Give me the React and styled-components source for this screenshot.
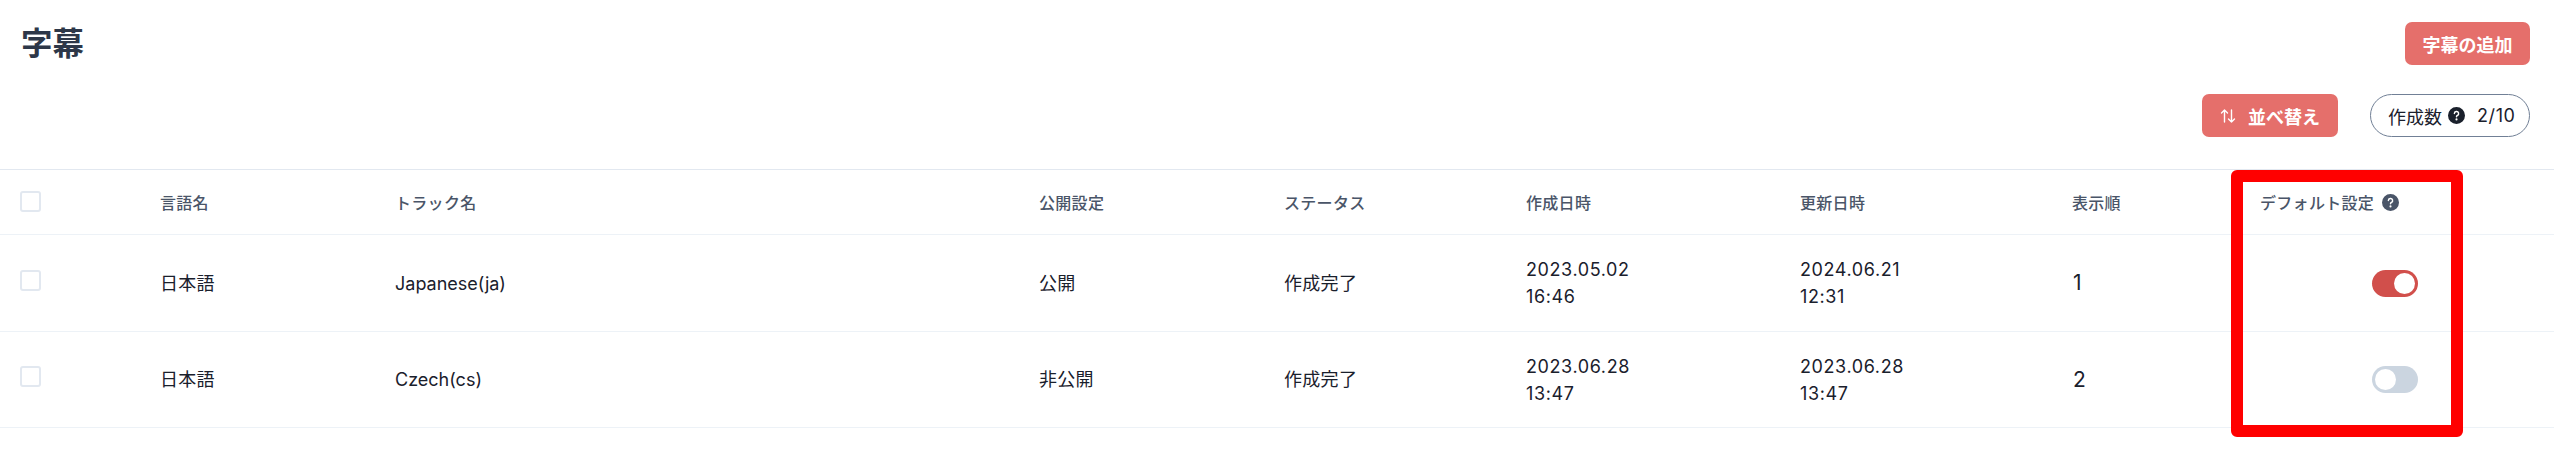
import React from 'react'
import styled, { createGlobalStyle } from 'styled-components'

const GlobalStyle = createGlobalStyle`
  html, body {
    margin: 0;
    padding: 0;
    background: #fff;
  }
  body {
    font-family: Inter, "Noto Sans CJK JP", sans-serif;
    color: #1a202c;
  }
`

const Page = styled.div`
  position: relative;
  width: 2554px;
  height: 466px;
  overflow: hidden;
`

const TitleBar = styled.div`
  display: flex;
  align-items: center;
  justify-content: space-between;
  padding: 22px 24px 0 21px;
`

const Title = styled.h1`
  margin: 0;
  font-size: 31.5px;
  line-height: 43px;
  font-weight: 700;
  color: #2d3748;
`

const Actions = styled.div`
  display: flex;
  justify-content: flex-end;
  align-items: center;
  gap: 32px;
  padding: 29px 24px 32px 0;
`

const Button = styled.button`
  display: flex;
  align-items: center;
  justify-content: center;
  gap: 12px;
  width: ${(p) => p.$width}px;
  height: 43px;
  padding: 0;
  border: 0;
  border-radius: 7px;
  background: #e56f6b;
  color: #fff;
  font-family: inherit;
  font-size: 18px;
  font-weight: 600;
`

const Count = styled.div`
  display: flex;
  align-items: center;
  box-sizing: border-box;
  width: 160px;
  height: 43px;
  padding-left: 17px;
  border: 1px solid #718096;
  border-radius: 22px;
  font-size: 18px;
`

const CountValue = styled.span`
  margin-left: 12px;
  letter-spacing: 0.6px;
`

const Help = styled.svg`
  flex: none;
  width: 17px;
  height: 17px;
  margin-left: ${(p) => p.$gap}px;
  fill: currentColor;
`

const Table = styled.table`
  width: 2554px;
  border-collapse: collapse;
  table-layout: fixed;
`

const HeadRow = styled.tr`
  height: 65px;
  border-top: 1px solid #e2e8f0;
  border-bottom: 1px solid #edf2f7;
`

const Row = styled.tr`
  height: ${(p) => p.$height}px;
  border-bottom: 1px solid #edf2f7;
`

const Th = styled.th`
  padding: 0;
  text-align: left;
  font-size: 16px;
  font-weight: 500;
  letter-spacing: 0.3px;
  color: #4a5568;
  &:first-child {
    padding-left: 20px;
  }
`

const Td = styled.td`
  padding: 0;
  font-size: 18px;
  line-height: 27px;
  &:first-child {
    padding-left: 20px;
  }
`

const Jp = styled.span`
  letter-spacing: 0.3px;
`

const Stamp = styled.span`
  letter-spacing: 0.6px;
`

const Order = styled.span`
  font-size: 21px;
  margin-left: 1px;
`

const HeadLabel = styled.span`
  display: inline-flex;
  align-items: center;
  margin-left: -1px;
`

const Check = styled.span`
  display: block;
  box-sizing: border-box;
  width: 21px;
  height: 21px;
  border: 2px solid #e2e8f0;
  border-radius: 3px;
  background: #fff;
  transform: translateY(${(p) => p.$shift}px);
`

const SwitchCell = styled(Td)`
  padding-right: 136px;
`

const Switch = styled.span`
  display: flex;
  justify-content: ${(p) => (p.$on ? 'flex-end' : 'flex-start')};
  box-sizing: border-box;
  width: 46px;
  height: 27px;
  margin-left: auto;
  padding: 3px;
  border-radius: 14px;
  background: ${(p) => (p.$on ? '#d14f4b' : '#cbd5e0')};
`

const Knob = styled.span`
  width: 21px;
  height: 21px;
  border-radius: 50%;
  background: #fff;
`

const Highlight = styled.div`
  position: absolute;
  left: 2231px;
  top: 170px;
  box-sizing: border-box;
  width: 232px;
  height: 267px;
  border: 12px solid #ff0000;
  border-radius: 6px;
  pointer-events: none;
`

const QUESTION =
  'M12,0A12,12,0,1,0,24,12,12.013,12.013,0,0,0,12,0Zm0,19a1.5,1.5,0,1,1,1.5-1.5A1.5,1.5,0,0,1,12,19Zm1.6-6.08a1,1,0,0,0-.6.917,1,1,0,1,1-2,0,3,3,0,0,1,1.8-2.75A2,2,0,1,0,10,9.255a1,1,0,1,1-2,0,4,4,0,1,1,5.6,3.666Z'

const HelpIcon = ({ gap }) => (
  <Help viewBox="0 0 24 24" $gap={gap}>
    <path d={QUESTION} />
  </Help>
)

const SortIcon = () => (
  <svg width="16" height="16" viewBox="0 0 16 16" fill="none" stroke="currentColor" strokeWidth="1.4" strokeLinecap="round" strokeLinejoin="round">
    <path d="M4.5 14V2M1.5 5l3-3 3 3" />
    <path d="M11.5 2v12M8.5 11l3 3 3-3" />
  </svg>
)

const COLUMNS = [160, 235, 644, 245, 242, 274, 272, 189, 293]

const ROWS = [
  { lang: '日本語', track: 'Japanese(ja)', open: '公開', created: ['2023.05.02', '16:46'], updated: ['2024.06.21', '12:31'], order: 1, on: true, height: 97 },
  { lang: '日本語', track: 'Czech(cs)', open: '非公開', created: ['2023.06.28', '13:47'], updated: ['2023.06.28', '13:47'], order: 2, on: false, height: 96 },
]

export default function App() {
  return (
    <Page>
      <GlobalStyle />
      <TitleBar>
        <Title>字幕</Title>
        <Button $width={125}>字幕の追加</Button>
      </TitleBar>
      <Actions>
        <Button $width={136}>
          <SortIcon />
          並べ替え
        </Button>
        <Count>
          作成数
          <HelpIcon gap={6} />
          <CountValue>2/10</CountValue>
        </Count>
      </Actions>
      <Table>
        <colgroup>
          {COLUMNS.map((w, i) => (
            <col key={i} width={w} />
          ))}
        </colgroup>
        <thead>
          <HeadRow>
            <Th><Check $shift={-1} /></Th>
            <Th>言語名</Th>
            <Th>トラック名</Th>
            <Th>公開設定</Th>
            <Th>ステータス</Th>
            <Th>作成日時</Th>
            <Th>更新日時</Th>
            <Th>表示順</Th>
            <Th>
              <HeadLabel>
                デフォルト設定
                <HelpIcon gap={8} />
              </HeadLabel>
            </Th>
          </HeadRow>
        </thead>
        <tbody>
          {ROWS.map((r) => (
            <Row key={r.track} $height={r.height}>
              <Td><Check $shift={-3} /></Td>
              <Td><Jp>{r.lang}</Jp></Td>
              <Td>{r.track}</Td>
              <Td><Jp>{r.open}</Jp></Td>
              <Td><Jp>作成完了</Jp></Td>
              <Td><Stamp>{r.created[0]}<br />{r.created[1]}</Stamp></Td>
              <Td><Stamp>{r.updated[0]}<br />{r.updated[1]}</Stamp></Td>
              <Td><Order>{r.order}</Order></Td>
              <SwitchCell>
                <Switch $on={r.on}><Knob /></Switch>
              </SwitchCell>
            </Row>
          ))}
        </tbody>
      </Table>
      <Highlight />
    </Page>
  )
}
